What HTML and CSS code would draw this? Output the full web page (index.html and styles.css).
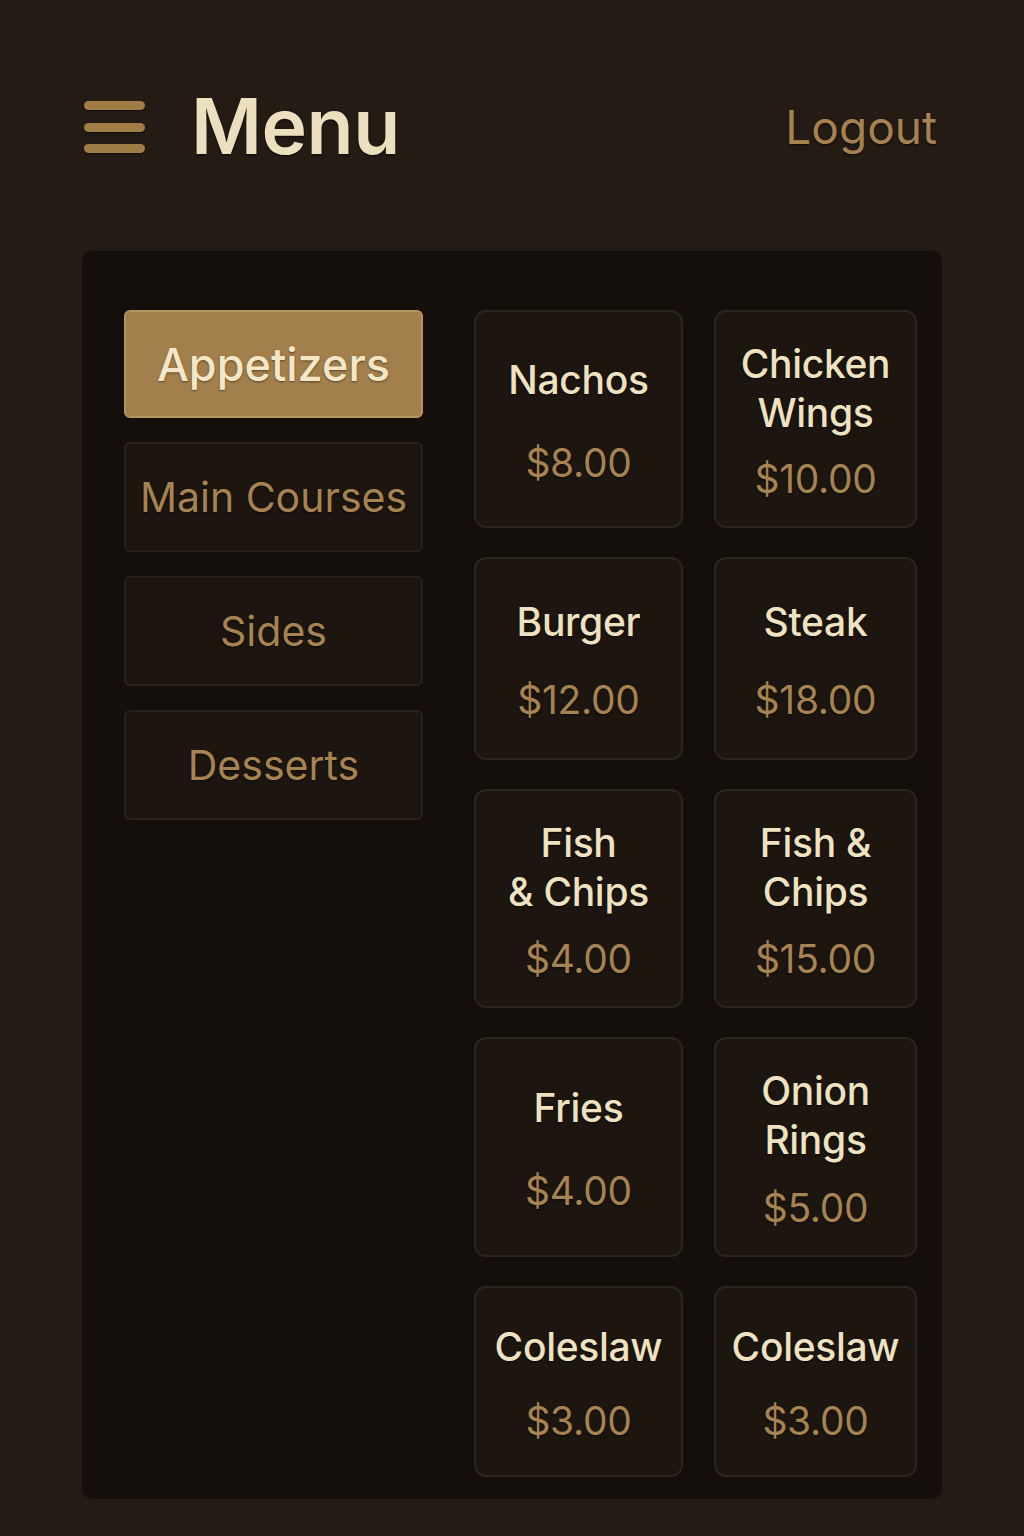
FILE: index.html
```html
<!DOCTYPE html>
<html lang="en">
<head>
<meta charset="utf-8">
<title>Menu</title>
<link rel="stylesheet" href="styles.css">
</head>
<body>
<header class="topbar">
  <div class="brand">
    <button class="burger" aria-label="Open menu">
      <span class="bar"></span><span class="bar"></span><span class="bar"></span>
    </button>
    <h1 class="title">Menu</h1>
  </div>
  <a class="logout" href="#">Logout</a>
</header>
<main class="panel">
  <nav class="cats">
    <button class="cat active">Appetizers</button>
    <button class="cat">Main Courses</button>
    <button class="cat">Sides</button>
    <button class="cat">Desserts</button>
  </nav>
  <section class="items">
    <div class="card"><div class="name">Nachos</div><div class="price">$8.00</div></div>
    <div class="card"><div class="name">Chicken<br>Wings</div><div class="price">$10.00</div></div>
    <div class="card"><div class="name">Burger</div><div class="price">$12.00</div></div>
    <div class="card"><div class="name">Steak</div><div class="price">$18.00</div></div>
    <div class="card"><div class="name">Fish<br>&amp; Chips</div><div class="price">$4.00</div></div>
    <div class="card"><div class="name">Fish &amp;<br>Chips</div><div class="price">$15.00</div></div>
    <div class="card"><div class="name">Fries</div><div class="price">$4.00</div></div>
    <div class="card"><div class="name">Onion<br>Rings</div><div class="price">$5.00</div></div>
    <div class="card"><div class="name">Coleslaw</div><div class="price">$3.00</div></div>
    <div class="card"><div class="name">Coleslaw</div><div class="price">$3.00</div></div>
  </section>
</main>
</body>
</html>
```

FILE: styles.css
```css
* { box-sizing: border-box; }

html, body {
  margin: 0;
  padding: 0;
}

body {
  background: #231b14;
  font-family: Inter, "Noto Sans", "Liberation Sans", sans-serif;
  color: #eee0bd;
  min-height: 1536px;
}

.topbar {
  display: flex;
  align-items: center;
  justify-content: space-between;
  height: 110px;
  margin-top: 72px;
  padding: 0 87px 0 84px;
}

.brand {
  display: flex;
  align-items: center;
  gap: 46px;
}

.burger {
  display: flex;
  flex-direction: column;
  gap: 12.5px;
  background: none;
  border: 0;
  padding: 0;
  width: 61px;
  cursor: pointer;
}

.bar {
  display: block;
  height: 9px;
  width: 61px;
  border-radius: 5px;
  background: #a07c47;
  box-shadow: 0 1px 1px rgba(0,0,0,0.5);
}

.title {
  margin: 0;
  font-size: 77px;
  font-weight: 600;
  letter-spacing: -0.5px;
  color: #ecdfbd;
  line-height: 1;
  text-shadow: 0 1px 2px rgba(0,0,0,0.7);
  padding-bottom: 2px;
}

.logout {
  font-size: 46px;
  font-weight: 400;
  color: #a58250;
  text-decoration: none;
  text-shadow: 0 1px 2px rgba(0,0,0,0.7);
}

.panel {
  margin: 69px 0 0 82px;
  width: 860px;
  background: #140f0b;
  border-radius: 10px;
  padding: 59px 25px 22px 42px;
  display: flex;
  align-items: flex-start;
  gap: 51px;
}

.cats {
  display: flex;
  flex-direction: column;
  gap: 24px;
  width: 299px;
  flex: none;
}

.cat {
  height: 110px;
  border-radius: 6px;
  border: 2px solid #2b2118;
  background: #1c1510;
  color: #a68350;
  font-family: inherit;
  font-size: 41px;
  font-weight: 400;
  text-shadow: 0 1px 2px rgba(0,0,0,0.6);
  cursor: pointer;
}

.cat.active {
  height: 108px;
  background: #a27f4b;
  border-color: #b8935a;
  color: #f3e7c8;
  font-size: 45px;
  font-weight: 500;
  text-shadow: 0 1px 2px rgba(40,25,10,0.6);
}

.items {
  display: grid;
  grid-template-columns: 209px 203px;
  grid-template-rows: 218px 203px 219px 220px 191px;
  column-gap: 31px;
  row-gap: 29px;
}

.card {
  display: flex;
  flex-direction: column;
  align-items: center;
  justify-content: space-evenly;
  text-align: center;
  background: #1d1610;
  border: 2px solid #2e2419;
  border-radius: 12px;
  padding: 8px 4px 4px;
}

.name {
  font-size: 39px;
  line-height: 49px;
  font-weight: 500;
  color: #efe2c0;
  letter-spacing: -0.3px;
  text-shadow: 0 1px 2px rgba(0,0,0,0.7);
}

.price {
  font-size: 39px;
  line-height: 48px;
  font-weight: 400;
  color: #a68350;
  letter-spacing: -0.3px;
  text-shadow: 0 1px 2px rgba(0,0,0,0.7);
}
```
